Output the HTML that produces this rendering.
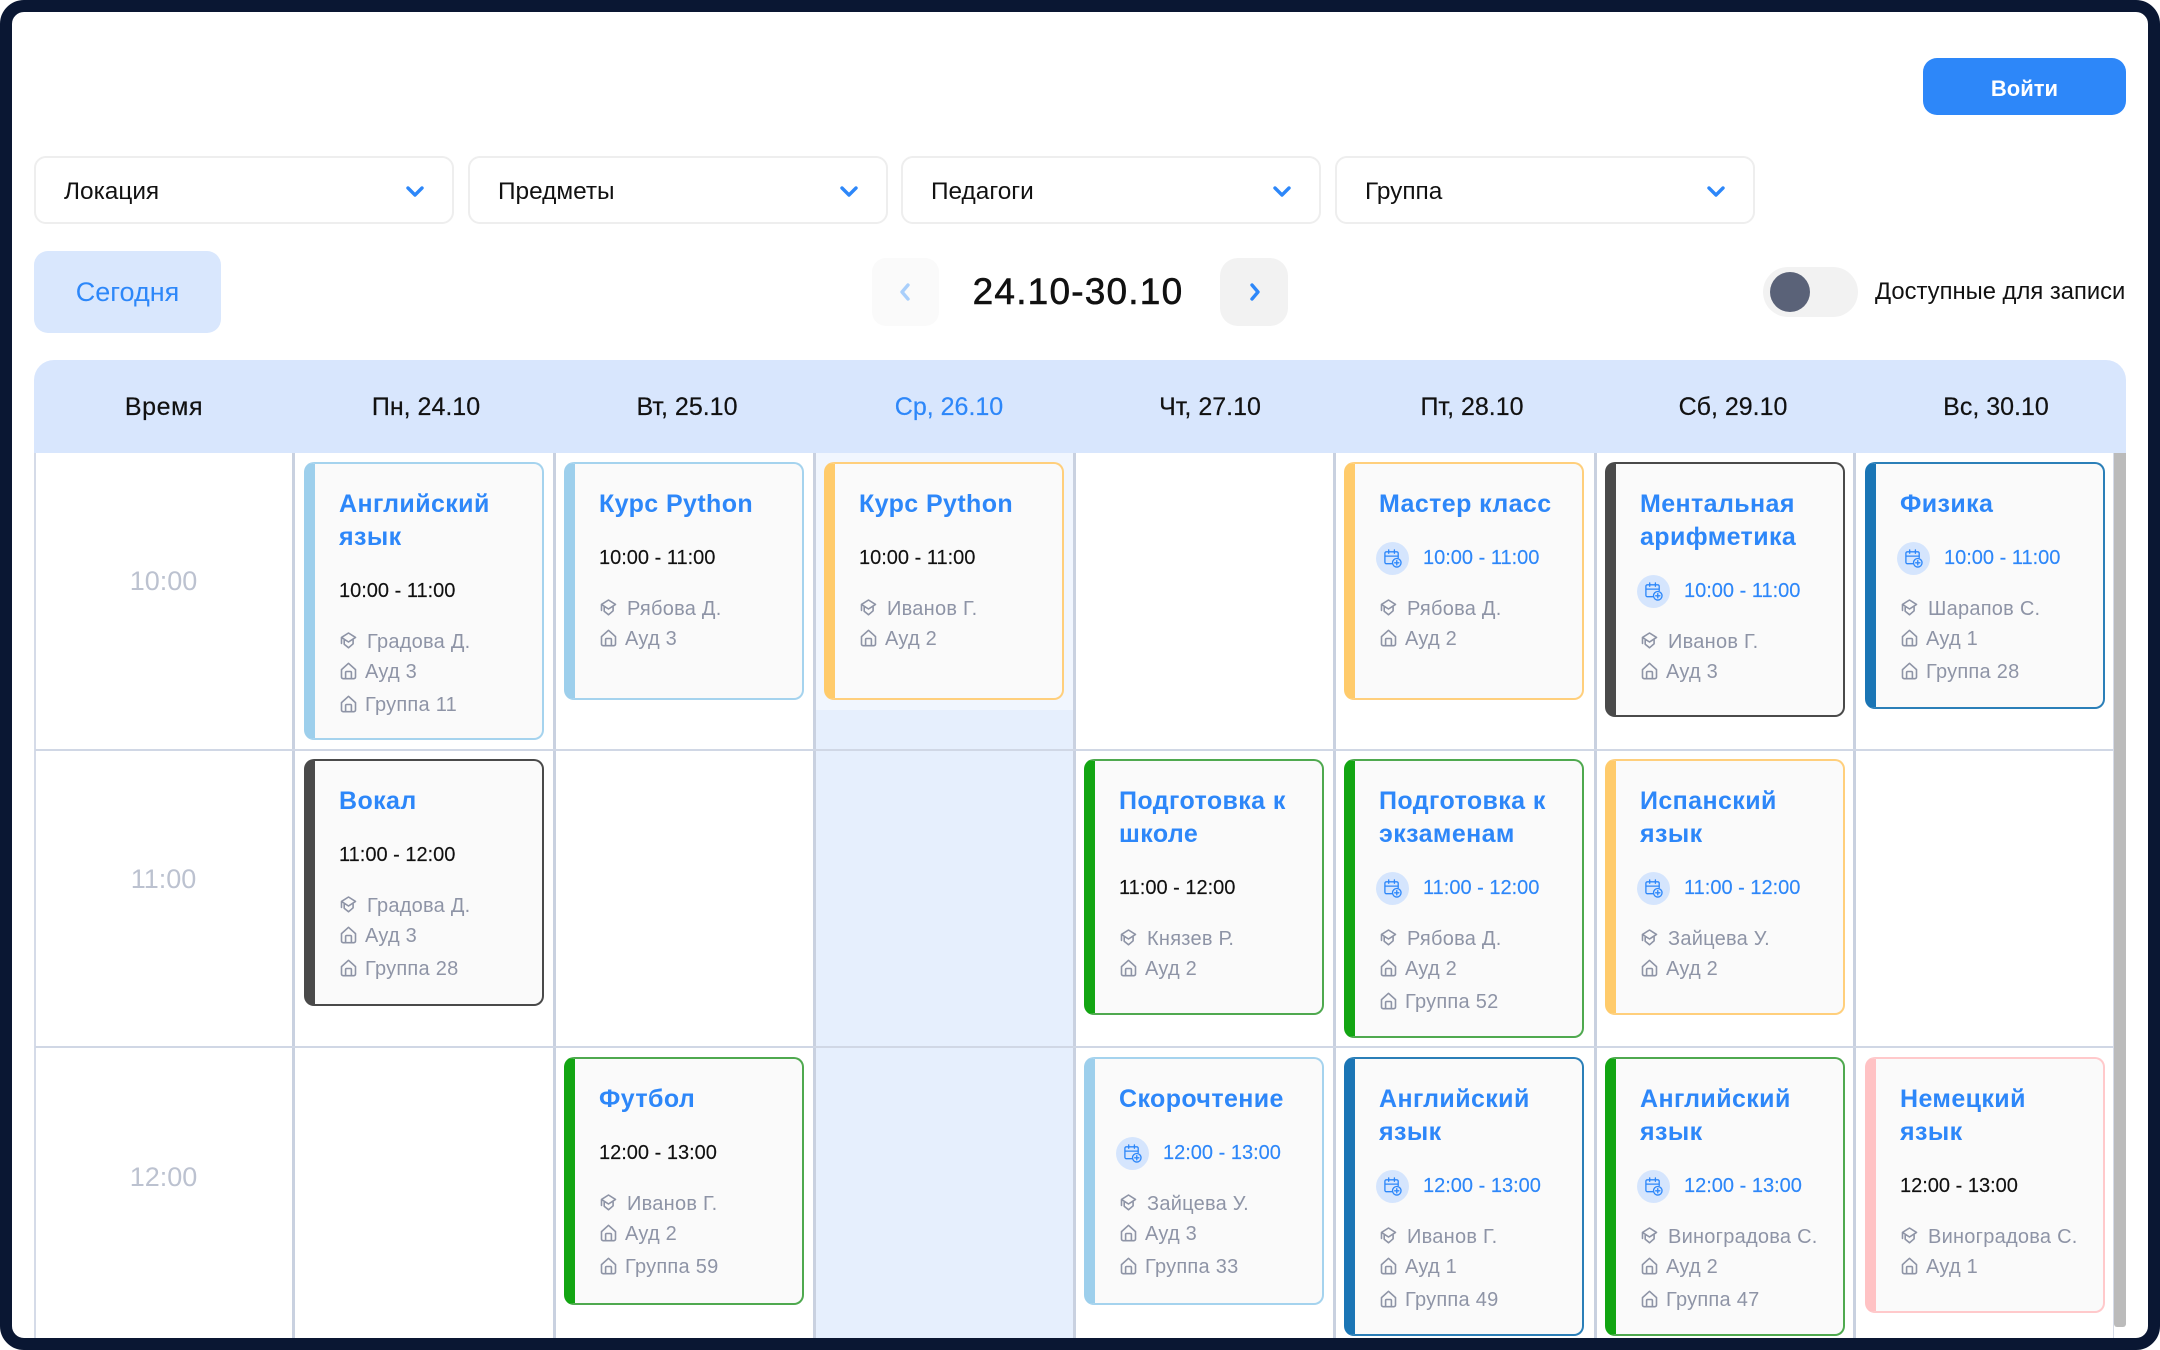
<!DOCTYPE html>
<html lang="ru"><head><meta charset="utf-8"><title>Расписание</title>
<style>
*{box-sizing:border-box;margin:0;padding:0}
html,body{width:2160px;height:1350px;overflow:hidden;background:#fff;font-family:"Liberation Sans",sans-serif}
.a{position:absolute}
.frame{position:absolute;left:0;top:0;width:2160px;height:1350px;border:12px solid #0a1733;border-radius:24px;z-index:20;pointer-events:none}
.sel{position:absolute;top:156px;width:420px;height:68px;border:2px solid #eee;border-radius:12px;background:#fff;font-size:24.4px;line-height:67px;padding-left:28px;color:#111}
.sel svg{position:absolute;right:28px;top:28px}
.hd{position:absolute;top:380px;width:260px;text-align:center;font-size:25px;line-height:54px;color:#111;-webkit-text-stroke:.2px currentColor}
.tm{position:absolute;left:34px;width:259px;text-align:center;font-size:27px;line-height:40px;color:#bcc2d0}
.vl{position:absolute;top:453px;width:3px;height:885px;background:#c9d1e0}
.hl{position:absolute;left:35px;width:2079px;height:2px;background:#d0d7e5}
.c{position:absolute;width:240px;background:#fafafa;border:2px solid;border-left-width:11px;border-radius:10px;padding:24px 0 0 24px;overflow:hidden}
.t{display:block;font-size:25px;font-weight:700;letter-spacing:.4px;line-height:33px;color:#2d87f9;white-space:nowrap}
.r{display:flex;align-items:center;height:33px;margin-top:21px;font-size:20px;color:#111;white-space:nowrap;-webkit-text-stroke:.15px currentColor}
.r.p{color:#2d87f9;margin-left:-3px}
.r.p i{display:flex;align-items:center;justify-content:center;width:33px;height:33px;border-radius:50%;background:#d5e5fd;margin-right:14px}
.m{display:flex;align-items:center;height:31px;margin-left:1px;font-size:20px;letter-spacing:.25px;color:#8e94a6;white-space:nowrap}
.r+.m{margin-top:19px}
.m+.m{margin-top:-1px}
.m+.m+.m{margin-top:2px}
.m svg{margin-right:8px;flex:none;transform:translateY(-2px)}
.m svg.k{margin-right:10px}
svg.i{fill:none;stroke:#8e94a6;stroke-width:1.6;stroke-linejoin:round;stroke-linecap:round}
.lb{border-color:#a5d3ee;border-left-color:#9dcfec}
.or{border-color:#ffcf7c;border-left-color:#ffcb6b}
.dk{border-color:#4a4a4a}
.gr{border-color:#4fa94f;border-left-color:#12a512}
.db{border-color:#2b7fb8;border-left-color:#1a75b5}
.pk{border-color:#ffc9cb;border-left-color:#ffc2c4}
</style></head><body>
<svg width="0" height="0" style="position:absolute"><defs>
<symbol id="cap" viewBox="0 0 17 17"><path d="M8.5 1l7 4.4-7 4.6-7-4.6Z M1.5 5.4v6 M4.2 8v4.2l4.3 3.6 4.6-4 0-3.9"/></symbol>
<symbol id="home" viewBox="0 0 17 18"><path d="M1.5 7.6 8.500 1.300l7 6.300V15a1.700 1.700 0 0 1-1.700 1.700H3.200A1.700 1.700 0 0 1 1.500 15Z M5.600 16.700V10.500a1 1 0 0 1 1-1h3.800a1 1 0 0 1 1 1v6.200"/></symbol>
<symbol id="cal" viewBox="0 0 20 20"><path d="M9 15.500H3.500A1.500 1.500 0 0 1 2 14V4.500A1.500 1.500 0 0 1 3.500 3h11A1.500 1.500 0 0 1 16 4.500V9 M2 7.500h14 M6 1v3.500 M12 1v3.500" fill="none" stroke="#2d87f9" stroke-width="1.400" stroke-linecap="round"/><circle cx="14.500" cy="14.500" r="4.500" fill="none" stroke="#2d87f9" stroke-width="1.400"/><path d="M14.500 12.300v4.400M12.300 14.500h4.400" fill="none" stroke="#2d87f9" stroke-width="1.400" stroke-linecap="round"/></symbol>
</defs></svg>

<div class="a" style="left:1923px;top:58px;width:203px;height:57px;background:#2d87f9;border-radius:14px;color:#fff;font-weight:700;font-size:22px;line-height:61px;text-align:center">Войти</div>

<div class="sel" style="left:34px">Локация<svg width="18" height="12" viewBox="0 0 18 12"><path d="M2 2l7 7 7-7" fill="none" stroke="#2d87f9" stroke-width="3.400" stroke-linecap="round" stroke-linejoin="round"/></svg></div>
<div class="sel" style="left:468px">Предметы<svg width="18" height="12" viewBox="0 0 18 12"><path d="M2 2l7 7 7-7" fill="none" stroke="#2d87f9" stroke-width="3.400" stroke-linecap="round" stroke-linejoin="round"/></svg></div>
<div class="sel" style="left:901px">Педагоги<svg width="18" height="12" viewBox="0 0 18 12"><path d="M2 2l7 7 7-7" fill="none" stroke="#2d87f9" stroke-width="3.400" stroke-linecap="round" stroke-linejoin="round"/></svg></div>
<div class="sel" style="left:1335px">Группа<svg width="18" height="12" viewBox="0 0 18 12"><path d="M2 2l7 7 7-7" fill="none" stroke="#2d87f9" stroke-width="3.400" stroke-linecap="round" stroke-linejoin="round"/></svg></div>

<div class="a" style="left:34px;top:251px;width:187px;height:82px;background:#d9e7fd;border-radius:14px;color:#2d87f9;font-size:27px;line-height:83px;text-align:center">Сегодня</div>

<div class="a" style="left:872px;top:258px;width:67px;height:68px;background:#fafafa;border-radius:14px"><svg class="a" style="left:26px;top:24px" width="14" height="20" viewBox="0 0 14 20"><path d="M10 3 4 10l6 7" fill="none" stroke="#a9cffb" stroke-width="3.400" stroke-linecap="round" stroke-linejoin="round"/></svg></div>
<div class="a" style="left:960px;top:268px;width:236px;text-align:center;font-size:37px;line-height:48px;letter-spacing:1.2px;color:#111;-webkit-text-stroke:.6px #111">24.10-30.10</div>
<div class="a" style="left:1220px;top:258px;width:68px;height:68px;background:#f2f2f2;border-radius:18px"><svg class="a" style="left:28px;top:24px" width="14" height="20" viewBox="0 0 14 20"><path d="M4 3l6 7-6 7" fill="none" stroke="#2d87f9" stroke-width="3.400" stroke-linecap="round" stroke-linejoin="round"/></svg></div>

<div class="a" style="left:1763px;top:267px;width:95px;height:50px;background:#f2f2f2;border-radius:25px"></div>
<div class="a" style="left:1770px;top:272px;width:40px;height:40px;background:#5a6278;border-radius:50%"></div>
<div class="a" style="left:1875px;top:274px;width:260px;font-size:23.8px;line-height:36px;color:#111;white-space:nowrap">Доступные для записи</div>

<div class="a" style="left:34px;top:360px;width:2092px;height:93px;background:#d8e6fd;border-radius:20px 20px 0 0"></div>
<div class="hd" style="left:34px;letter-spacing:.6px">Время</div>
<div class="hd" style="left:296px">Пн, 24.10</div>
<div class="hd" style="left:557px">Вт, 25.10</div>
<div class="hd" style="left:819px;color:#2d87f9">Ср, 26.10</div>
<div class="hd" style="left:1080px">Чт, 27.10</div>
<div class="hd" style="left:1342px">Пт, 28.10</div>
<div class="hd" style="left:1603px">Сб, 29.10</div>
<div class="hd" style="left:1866px">Вс, 30.10</div>

<div class="a" style="left:816px;top:453px;width:257px;height:257px;background:#f1f6fe"></div>
<div class="a" style="left:816px;top:710px;width:257px;height:628px;background:#e6effd"></div>

<div class="a" style="left:34px;top:453px;width:2px;height:885px;background:#d5dbe8"></div>
<div class="vl" style="left:292px"></div><div class="vl" style="left:553px"></div><div class="vl" style="left:813px"></div><div class="vl" style="left:1073px"></div><div class="vl" style="left:1333px"></div><div class="vl" style="left:1594px"></div><div class="vl" style="left:1853px"></div>
<div class="hl" style="top:749px"></div><div class="hl" style="top:1046px"></div>
<div class="a" style="left:2113px;top:453px;width:1px;height:885px;background:#d5dbe8"></div>
<div class="a" style="left:2114px;top:453px;width:12px;height:874px;background:#bbb;border-radius:0 0 3px 3px"></div>

<div class="tm" style="top:561px">10:00</div>
<div class="tm" style="top:859px">11:00</div>
<div class="tm" style="top:1157px">12:00</div>

<!-- row 1 -->
<div class="c lb" style="left:304px;top:462px;height:278px"><span class="t">Английский<br>язык</span><div class="r">10:00 - 11:00</div><div class="m"><svg class="i k" width="17" height="17"><use href="#cap"/></svg>Градова Д.</div><div class="m"><svg class="i" width="17" height="18"><use href="#home"/></svg>Ауд 3</div><div class="m"><svg class="i" width="17" height="18"><use href="#home"/></svg>Группа 11</div></div>
<div class="c lb" style="left:564px;top:462px;height:238px"><span class="t">Курс Python</span><div class="r">10:00 - 11:00</div><div class="m"><svg class="i k" width="17" height="17"><use href="#cap"/></svg>Рябова Д.</div><div class="m"><svg class="i" width="17" height="18"><use href="#home"/></svg>Ауд 3</div></div>
<div class="c or" style="left:824px;top:462px;height:238px"><span class="t">Курс Python</span><div class="r">10:00 - 11:00</div><div class="m"><svg class="i k" width="17" height="17"><use href="#cap"/></svg>Иванов Г.</div><div class="m"><svg class="i" width="17" height="18"><use href="#home"/></svg>Ауд 2</div></div>
<div class="c or" style="left:1344px;top:462px;height:238px"><span class="t">Мастер класс</span><div class="r p"><i><svg width="19" height="19"><use href="#cal"/></svg></i>10:00 - 11:00</div><div class="m"><svg class="i k" width="17" height="17"><use href="#cap"/></svg>Рябова Д.</div><div class="m"><svg class="i" width="17" height="18"><use href="#home"/></svg>Ауд 2</div></div>
<div class="c dk" style="left:1605px;top:462px;height:255px"><span class="t">Ментальная<br>арифметика</span><div class="r p"><i><svg width="19" height="19"><use href="#cal"/></svg></i>10:00 - 11:00</div><div class="m"><svg class="i k" width="17" height="17"><use href="#cap"/></svg>Иванов Г.</div><div class="m"><svg class="i" width="17" height="18"><use href="#home"/></svg>Ауд 3</div></div>
<div class="c db" style="left:1865px;top:462px;height:247px"><span class="t">Физика</span><div class="r p"><i><svg width="19" height="19"><use href="#cal"/></svg></i>10:00 - 11:00</div><div class="m"><svg class="i k" width="17" height="17"><use href="#cap"/></svg>Шарапов С.</div><div class="m"><svg class="i" width="17" height="18"><use href="#home"/></svg>Ауд 1</div><div class="m"><svg class="i" width="17" height="18"><use href="#home"/></svg>Группа 28</div></div>

<!-- row 2 -->
<div class="c dk" style="left:304px;top:759px;height:247px"><span class="t">Вокал</span><div class="r">11:00 - 12:00</div><div class="m"><svg class="i k" width="17" height="17"><use href="#cap"/></svg>Градова Д.</div><div class="m"><svg class="i" width="17" height="18"><use href="#home"/></svg>Ауд 3</div><div class="m"><svg class="i" width="17" height="18"><use href="#home"/></svg>Группа 28</div></div>
<div class="c gr" style="left:1084px;top:759px;height:256px"><span class="t">Подготовка к<br>школе</span><div class="r">11:00 - 12:00</div><div class="m"><svg class="i k" width="17" height="17"><use href="#cap"/></svg>Князев Р.</div><div class="m"><svg class="i" width="17" height="18"><use href="#home"/></svg>Ауд 2</div></div>
<div class="c gr" style="left:1344px;top:759px;height:279px"><span class="t">Подготовка к<br>экзаменам</span><div class="r p"><i><svg width="19" height="19"><use href="#cal"/></svg></i>11:00 - 12:00</div><div class="m"><svg class="i k" width="17" height="17"><use href="#cap"/></svg>Рябова Д.</div><div class="m"><svg class="i" width="17" height="18"><use href="#home"/></svg>Ауд 2</div><div class="m"><svg class="i" width="17" height="18"><use href="#home"/></svg>Группа 52</div></div>
<div class="c or" style="left:1605px;top:759px;height:256px"><span class="t">Испанский<br>язык</span><div class="r p"><i><svg width="19" height="19"><use href="#cal"/></svg></i>11:00 - 12:00</div><div class="m"><svg class="i k" width="17" height="17"><use href="#cap"/></svg>Зайцева У.</div><div class="m"><svg class="i" width="17" height="18"><use href="#home"/></svg>Ауд 2</div></div>

<!-- row 3 -->
<div class="c gr" style="left:564px;top:1057px;height:248px"><span class="t">Футбол</span><div class="r">12:00 - 13:00</div><div class="m"><svg class="i k" width="17" height="17"><use href="#cap"/></svg>Иванов Г.</div><div class="m"><svg class="i" width="17" height="18"><use href="#home"/></svg>Ауд 2</div><div class="m"><svg class="i" width="17" height="18"><use href="#home"/></svg>Группа 59</div></div>
<div class="c lb" style="left:1084px;top:1057px;height:248px"><span class="t">Скорочтение</span><div class="r p"><i><svg width="19" height="19"><use href="#cal"/></svg></i>12:00 - 13:00</div><div class="m"><svg class="i k" width="17" height="17"><use href="#cap"/></svg>Зайцева У.</div><div class="m"><svg class="i" width="17" height="18"><use href="#home"/></svg>Ауд 3</div><div class="m"><svg class="i" width="17" height="18"><use href="#home"/></svg>Группа 33</div></div>
<div class="c db" style="left:1344px;top:1057px;height:279px"><span class="t">Английский<br>язык</span><div class="r p"><i><svg width="19" height="19"><use href="#cal"/></svg></i>12:00 - 13:00</div><div class="m"><svg class="i k" width="17" height="17"><use href="#cap"/></svg>Иванов Г.</div><div class="m"><svg class="i" width="17" height="18"><use href="#home"/></svg>Ауд 1</div><div class="m"><svg class="i" width="17" height="18"><use href="#home"/></svg>Группа 49</div></div>
<div class="c gr" style="left:1605px;top:1057px;height:279px"><span class="t">Английский<br>язык</span><div class="r p"><i><svg width="19" height="19"><use href="#cal"/></svg></i>12:00 - 13:00</div><div class="m"><svg class="i k" width="17" height="17"><use href="#cap"/></svg>Виноградова С.</div><div class="m"><svg class="i" width="17" height="18"><use href="#home"/></svg>Ауд 2</div><div class="m"><svg class="i" width="17" height="18"><use href="#home"/></svg>Группа 47</div></div>
<div class="c pk" style="left:1865px;top:1057px;height:256px"><span class="t">Немецкий<br>язык</span><div class="r">12:00 - 13:00</div><div class="m"><svg class="i k" width="17" height="17"><use href="#cap"/></svg>Виноградова С.</div><div class="m"><svg class="i" width="17" height="18"><use href="#home"/></svg>Ауд 1</div></div>

<div class="frame"></div>
</body></html>
